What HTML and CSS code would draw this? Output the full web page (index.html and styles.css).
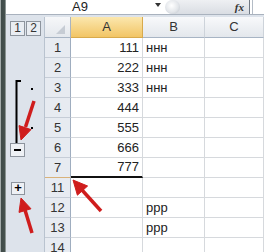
FILE: index.html
```html
<!DOCTYPE html>
<html lang="en">
<head>
    <meta charset="UTF-8">
    <title>Grouped rows</title>
    <link rel="stylesheet" href="styles.css">
</head>
<body>

    <div class="app">
        <div class="edge"></div>
        <div class="main">
            <!-- formula bar -->
            <div class="fbar">
                <div class="namebox"><span class="ref">A9</span><span class="drop"></span></div>
                <div class="fxpanel"><span class="knob"></span><span class="fx">fx</span></div>
                <div class="formula"></div>
            </div>

            <!-- sheet -->
            <div class="sheet">
                <div class="ol levels"><span class="lvl">1</span><span class="lvl">2</span></div>
                <div class="corner"></div>
                <div class="ch active">A</div>
                <div class="ch">B</div>
                <div class="ch">C</div>

                <div class="ol"></div><div class="rh">1</div><div class="cell num">111</div><div class="cell">ннн</div><div class="cell"></div>
                <div class="ol"></div><div class="rh">2</div><div class="cell num">222</div><div class="cell">ннн</div><div class="cell"></div>
                <div class="ol"></div><div class="rh">3</div><div class="cell num">333</div><div class="cell">ннн</div><div class="cell"></div>
                <div class="ol"></div><div class="rh">4</div><div class="cell num">444</div><div class="cell"></div><div class="cell"></div>
                <div class="ol"></div><div class="rh">5</div><div class="cell num">555</div><div class="cell"></div><div class="cell"></div>
                <div class="ol low"><span class="obtn"><span class="bar"></span></span></div><div class="rh">6</div><div class="cell num">666</div><div class="cell"></div><div class="cell"></div>
                <div class="ol"></div><div class="rh hid">7</div><div class="cell num thick">777</div><div class="cell"></div><div class="cell"></div>
                <div class="ol"><span class="obtn plus">+</span></div><div class="rh">11</div><div class="cell"></div><div class="cell"></div><div class="cell"></div>
                <div class="ol"></div><div class="rh">12</div><div class="cell"></div><div class="cell">ppp</div><div class="cell"></div>
                <div class="ol"></div><div class="rh">13</div><div class="cell"></div><div class="cell">ppp</div><div class="cell"></div>
                <div class="ol"></div><div class="rh">14</div><div class="cell"></div><div class="cell"></div><div class="cell"></div>
            </div>
        </div>

        <!-- outline bracket and red arrows drawn over the sheet -->
        <svg class="marks" width="264" height="252" viewBox="0 0 264 252">
            <path d="M21 81H16.5V143" stroke="#000" stroke-width="2" fill="none"/>
            <rect x="31" y="88" width="2" height="2" fill="#000"/>
            <rect x="31" y="127" width="2" height="2" fill="#000"/>

            <g fill="#cf1d1d" stroke="#cf1d1d">
                <line x1="34" y1="101" x2="25.5" y2="127" stroke-width="3.5"/>
                <polygon points="21,140 31,129.6 19,125.6" stroke-width="1"/>

                <line x1="32" y1="233" x2="25" y2="210" stroke-width="3.5"/>
                <polygon points="21,198 31,208.8 19,212.4" stroke-width="1"/>

                <line x1="101" y1="211" x2="82" y2="190" stroke-width="3.5"/>
                <polygon points="73,180 87.6,186 77.4,195.2" stroke-width="1"/>
            </g>
        </svg>
    </div>

</body>
</html>
```

FILE: styles.css
```css
body { margin: 0; font-family: "Liberation Sans", Arial, sans-serif; font-size: 13px; color: #222; }
.app { position: relative; display: flex; width: 264px; height: 252px; overflow: hidden; background: #dde3eb; }
.edge { flex: none; width: 6px; background: linear-gradient(to right, #a3abaa 0, #a3abaa 1px, #3f4b49 1px, #46524f 5px, #8a9492 5px); }
.main { flex: 1; display: flex; flex-direction: column; min-width: 0; }

/* formula bar */
.fbar { display: flex; height: 14px; border-bottom: 1px solid #a9b2be; margin-bottom: 2px; background: #fff; }
.namebox { position: relative; width: 159px; padding-left: 66px; box-sizing: border-box; }
.ref { display: block; line-height: 14px; color: #222; }
.drop { position: absolute; left: 149px; top: 3px; width: 0; height: 0; border-left: 3px solid transparent; border-right: 3px solid transparent; border-top: 4px solid #333; }
.fxpanel { position: relative; width: 85px; display: flex; justify-content: flex-end; align-items: center; padding-right: 4px; box-sizing: border-box; background: linear-gradient(#eef0f3, #d9dde3); border-right: 1px solid #6f7884; border-radius: 8px 0 0 8px; }
.knob { position: absolute; left: 1px; top: 0; width: 14px; height: 14px; border-radius: 50%; background: radial-gradient(circle at 40% 40%, #ffffff 0, #e3e6ea 55%, #b9bfc7 100%); }
.fx { font-family: "Liberation Serif", serif; font-style: italic; font-weight: bold; font-size: 11px; line-height: 12px; padding-right: 1px; color: #333; }
.formula { flex: 1; border-left: 2px solid #fff; box-shadow: inset 1px 0 0 #b4bcc6; }

/* sheet grid */
.sheet { display: grid; grid-template-columns: 39px 26px 72px 62px 1fr; grid-template-rows: 21px; grid-auto-rows: 20px; }
.ol { display: flex; align-items: center; padding-left: 4px; background: #dde3eb; border-right: 1px solid #b9c3cf; box-sizing: border-box; }
.ol.low { align-items: flex-end; padding-bottom: 1px; }
.levels { gap: 1px; padding-top: 1px; }
.lvl { width: 15px; height: 15px; box-sizing: border-box; border: 1px solid #8d949d; background: #e9edf2; text-align: center; line-height: 13px; font-size: 12px; color: #333; }
.obtn { display: flex; align-items: center; justify-content: center; width: 15px; height: 14px; box-sizing: border-box; border: 1px solid #8d949d; background: #eef1f5; font-size: 13px; font-weight: bold; color: #000; }
.obtn .bar { width: 7px; height: 2px; background: #000; }
.obtn.plus { width: 14px; height: 13px; margin-left: 1px; line-height: 12px; }

.corner { position: relative; background: linear-gradient(#f6f7f9, #e4e8ed); border-right: 1px solid #a9b4c2; border-bottom: 1px solid #a7b4c4; box-sizing: border-box; }
.corner::after { content: ""; position: absolute; right: 5px; bottom: 3px; width: 0; height: 0; border-left: 9px solid transparent; border-bottom: 9px solid #c6ccd4; }
.ch { background: linear-gradient(#f8f9fb, #e3e7ec); border-right: 1px solid #cdd3da; border-bottom: 1px solid #a7b4c4; box-sizing: border-box; text-align: center; line-height: 20px; color: #333; }
.ch.active { background: linear-gradient(#fbe7ae, #f2c565); border-right-color: #d8aa4c; border-bottom-color: #d8aa4c; }

.rh { background: #e7ebf1; border-right: 1px solid #9fadbf; border-bottom: 1px solid #c6cdd7; box-sizing: border-box; text-align: center; line-height: 19px; color: #333; }
.rh.hid { border-bottom-color: #d9b27a; }
.cell { background: #fff; border-right: 1px solid #d6d9dd; border-bottom: 1px solid #d6d9dd; box-sizing: border-box; padding-left: 3px; line-height: 19px; white-space: nowrap; overflow: hidden; }
.cell.num { text-align: right; padding-right: 3px; padding-left: 0; }
.cell.thick { border-bottom: 2px solid #111; line-height: 18px; }

.marks { position: absolute; left: 0; top: 0; pointer-events: none; }
```
